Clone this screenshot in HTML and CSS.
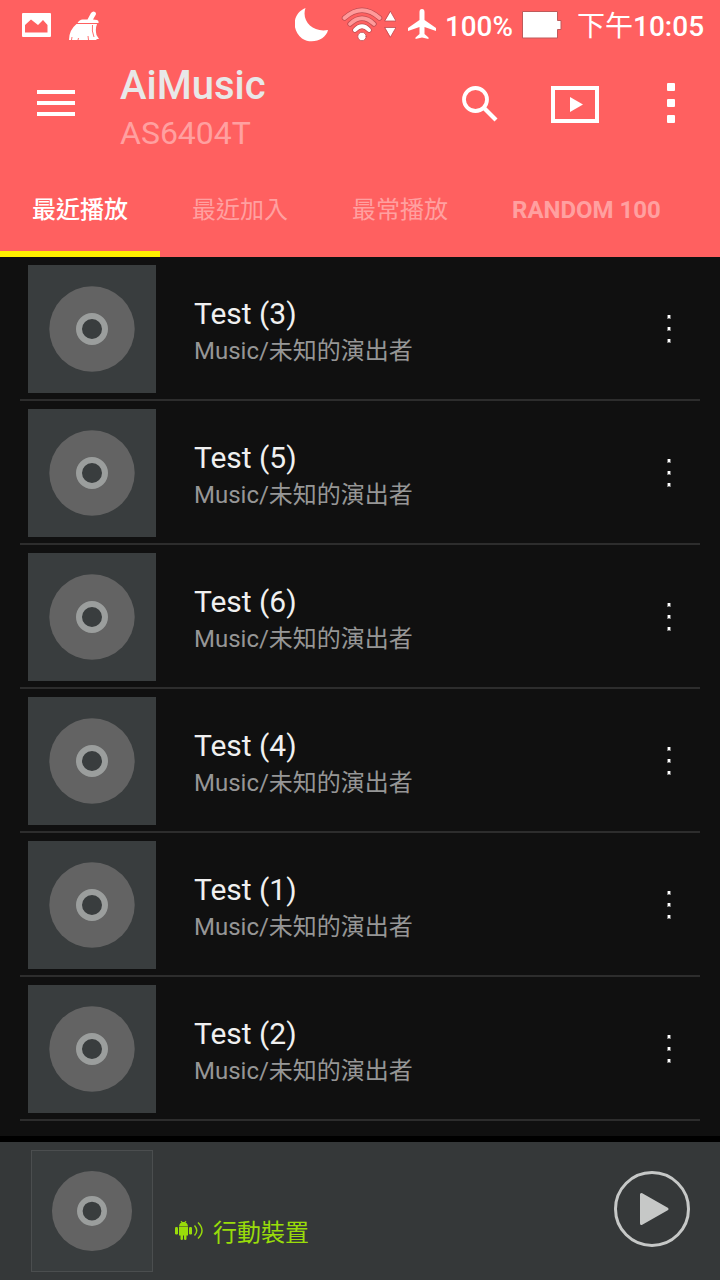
FILE: index.html
```html
<!DOCTYPE html>
<html lang="zh-Hant">
<head>
<meta charset="utf-8">
<title>AiMusic</title>
<link rel="stylesheet" href="styles.css">
</head>
<body>
<svg class="defs" width="0" height="0">
  <symbol id="disc" viewBox="0 0 128 128">
    <circle cx="64" cy="64" r="42.700" fill="#636363"/>
    <circle cx="64" cy="64" r="13" fill="#393d3e" stroke="#9b9e9d" stroke-width="6"/>
  </symbol>
  <symbol id="dots" viewBox="0 0 4 28">
    <path d="M0 0h4v4H0zM0 12h4v4H0zM0 24h4v4H0z" fill="#777"/>
    <path d="M1 0h2v3H1zM1 12h2v3H1zM1 24h2v3H1z" fill="#fff"/>
  </symbol>
</svg>
<header class="header">
  <div class="status">
    <svg class="status-photo" width="29" height="24" viewBox="0 0 29 24"><path fill="#fff" fill-rule="evenodd" d="M1 0h27q1 0 1 1v22q0 1-1 1H1q-1 0-1-1V1q0-1 1-1zM3 19.500h22.500v-7.500l-4.500-5-5 5-7-5.500L3 12z"/></svg>
    <svg class="status-broom" width="31" height="30" viewBox="0 0 31 30"><path fill="#fff" d="M18.500 8.500 22 2q2-2.500 4-1t0 4l-2 3.500 4 .5q2 .5 1.500 3H8.500q2-3.500 5-3.500zM7.500 13H28q-2 5-.5 11l2.500 4h-2l-1 1H0Q0 19 7.500 13z"/><path d="M23.500 14q-1 6 1.500 12M19 25l.5 4M3 26l-.5 3M9.500 27l-.5 2" fill="none" stroke="#ff6060" stroke-width=".9"/></svg>
    <svg class="status-moon" width="34" height="34" viewBox="0 0 34 34"><path fill="#fff" d="M10.500 0C-2.500 5-4 22 7 30.500 17 37 31 31.500 33 22 18 25 6 13 10.500 0z"/></svg>
    <svg class="status-wifi" width="55" height="36" viewBox="0 0 55 36" fill="none" stroke-linecap="round">
      <g stroke="#bf4b50" stroke-width="5.400"><path d="M3.500 12Q21-3.500 38.500 12"/><path d="M9 18Q21 6.500 33 18"/><path d="M14 24Q21 16.500 28 24"/></g>
      <g stroke="#ff9a9a" stroke-width="3.800"><path d="M3.500 12Q21-3.500 38.500 12"/><path d="M9 18Q21 6.500 33 18"/></g>
      <path stroke="#fff" stroke-width="4" d="M14 24Q21 16.500 28 24"/>
      <circle cx="21" cy="30.500" r="4.200" fill="#fff" stroke="#bf4b50" stroke-width=".8"/>
      <path d="M49.500 5.500 55 15H44zM44 21.500h11l-5.500 9.500z" fill="#fff" stroke="#bf4b50" stroke-width=".8" stroke-linejoin="round"/>
    </svg>
    <svg class="status-plane" width="28" height="30" viewBox="0 0 28 30"><path fill="#fff" d="M14 0q2.500 0 2.500 3v8L28 19v3l-11.500-4v7l4 3.500V30L14 28.500 7.500 30v-1.500l4-3.500v-7L0 22v-3l11.500-8V3q0-3 2.500-3z"/></svg>
    <span class="status-percent">100%</span>
    <svg class="status-battery" width="40" height="28" viewBox="0 0 40 28"><path d="M.5.500h35v9h3.500v9h-3.500v8.500H.5z" fill="#fff" stroke="#bf5a5a"/></svg>
    <span class="status-clock"><span class="meridiem">下午</span>10:05</span>
  </div>
  <div class="toolbar">
    <svg class="menu" width="38" height="26" viewBox="0 0 38 26"><path fill="#fff" d="M0 0h38v4H0zM0 11h38v4H0zM0 22h38v4H0z"/></svg>
    <div class="titles">
      <h1 class="title">AiMusic</h1>
      <div class="subtitle">AS6404T</div>
    </div>
    <svg class="search" width="36" height="36" viewBox="0 0 36 36" fill="none" stroke="#fff"><circle cx="13.500" cy="13.500" r="11.500" stroke-width="3.800"/><path d="M22 22l12 12" stroke-width="4.200"/></svg>
    <svg class="video" width="48" height="37" viewBox="0 0 48 37"><path fill="none" stroke="#fff" stroke-width="4" d="M2 2h44v33H2z"/><path fill="#fff" d="M19 11l13 7.500L19 26z"/></svg>
    <svg class="more" width="8" height="40" viewBox="0 0 8 40"><g fill="#fff"><rect width="8" height="8" rx="1"/><rect y="16" width="8" height="8" rx="1"/><rect y="32" width="8" height="8" rx="1"/></g></svg>
  </div>
  <nav class="tabs">
    <a class="tab tab-active">最近播放</a>
    <a class="tab">最近加入</a>
    <a class="tab">最常播放</a>
    <a class="tab tab-latin">RANDOM 100</a>
  </nav>
</header>
<main class="list">
  <div class="row"><svg class="cover"><use href="#disc"/></svg><div class="info"><div class="name">Test (3)</div><div class="artist">Music/未知的演出者</div></div><svg class="row-more"><use href="#dots"/></svg></div>
  <div class="row"><svg class="cover"><use href="#disc"/></svg><div class="info"><div class="name">Test (5)</div><div class="artist">Music/未知的演出者</div></div><svg class="row-more"><use href="#dots"/></svg></div>
  <div class="row"><svg class="cover"><use href="#disc"/></svg><div class="info"><div class="name">Test (6)</div><div class="artist">Music/未知的演出者</div></div><svg class="row-more"><use href="#dots"/></svg></div>
  <div class="row"><svg class="cover"><use href="#disc"/></svg><div class="info"><div class="name">Test (4)</div><div class="artist">Music/未知的演出者</div></div><svg class="row-more"><use href="#dots"/></svg></div>
  <div class="row"><svg class="cover"><use href="#disc"/></svg><div class="info"><div class="name">Test (1)</div><div class="artist">Music/未知的演出者</div></div><svg class="row-more"><use href="#dots"/></svg></div>
  <div class="row"><svg class="cover"><use href="#disc"/></svg><div class="info"><div class="name">Test (2)</div><div class="artist">Music/未知的演出者</div></div><svg class="row-more"><use href="#dots"/></svg></div>
</main>
<footer class="player">
  <svg class="player-cover"><use href="#disc"/></svg>
  <div class="device">
    <svg width="28" height="20" viewBox="0 0 28 20"><g fill="#99dc0a"><path d="M4 5.500Q4.500 2 6.500 1.500L5.500 0h1L7.500 1h2L10.500 0h1l-1 1.500Q12.500 2 13 5.500zM4 6h9v8.500h-1.500V18q0 1-1.200 1T9 18v-3.500H8V18q0 1-1.200 1t-1.300-1v-3.500H4z"/><rect y="6" width="3" height="7.500" rx="1.200"/><rect x="14" y="6" width="3" height="7.500" rx="1.200"/></g><path d="M19.500 4.500q4.500 5 0 10M23 1.500q8 8 0 16" fill="none" stroke="#99dc0a" stroke-width="1.400"/></svg>
    <span>行動裝置</span>
  </div>
  <svg class="play" width="76" height="76" viewBox="0 0 76 76"><circle cx="38" cy="38" r="36.500" fill="none" stroke="#c6c8c7" stroke-width="3"/><path d="M27.500 23.500v29L53 38z" fill="#c6c8c7" stroke="#c6c8c7" stroke-width="3" stroke-linejoin="round"/></svg>
</footer>
</body>
</html>
```
FILE: styles.css
```css
* { box-sizing: border-box; }
body {
  margin: 0;
  width: 720px;
  height: 1280px;
  display: flex;
  flex-direction: column;
  overflow: hidden;
  background: #000;
  font-family: Roboto, "Noto Sans CJK TC", sans-serif;
}
svg { display: block; flex: none; }
.defs { display: none; }
.header { height: 257px; background: #ff6060; }
.status { display: flex; height: 50px; color: #fff; font-size: 28px; font-weight: 500; line-height: 32px; white-space: nowrap; }
.status-photo { margin: 13px 0 0 22px; }
.status-broom { margin: 11px 0 0 18px; }
.status-moon { margin: 8px 0 0 195px; }
.status-wifi { margin: 6px 0 0 12px; }
.status-plane { margin: 9px 0 0 12px; }
.status-percent { width: 76px; margin: 11px 0 0 9px; font-size: 27.8px; }
.status-battery { margin: 11px 0 0 1px; }
.status-clock { margin: 11px 0 0 15px; }
.meridiem { font-weight: 400; }
.toolbar { display: flex; height: 112px; }
.menu { margin: 40px 0 0 37px; }
.titles { width: 342px; padding: 12px 0 0 45px; }
.title { margin: 0; color: #e8e8e8; font-size: 40px; font-weight: 500; line-height: 48px; }
.subtitle { color: #ffa0a0; font-size: 32px; line-height: 46px; }
.search { margin: 36px 0 0 45px; }
.video { margin: 36px 0 0 53px; }
.more { margin: 33px 0 0 68px; }
.tabs { display: flex; height: 95px; }
.tab { padding: 30px 32px 0; color: #ffa0a0; font-size: 24px; font-weight: 400; line-height: 36px; white-space: nowrap; }
.tab-latin { font-weight: 700; }
.tab-active { color: #fff; font-weight: 500; border-bottom: 6px solid #fff000; }
.list { height: 879px; background: #101010; }
.row { display: flex; height: 144px; margin: 0 20px; padding: 8px 8px 6px; border-bottom: 2px solid #2d2d2d; }
.cover { width: 128px; height: 128px; background: #393d3e; }
.info { flex: 1; padding: 30px 0 0 38px; }
.name { color: #f0f0f0; font-size: 30px; line-height: 38px; }
.artist { color: #969696; font-size: 24px; line-height: 36px; }
.row-more { width: 4px; height: 28px; margin: 50px 21px 0 0; }
.player { display: flex; height: 138px; margin-top: 6px; background: #353839; }
.player-cover { width: 122px; height: 122px; margin: 8px 0 0 31px; background: #393d3e; border: 1px solid #4b4e4f; }
.device { display: flex; flex: 1; align-items: center; gap: 10px; height: 36px; margin: 71px 0 0 22px; color: #99dc0a; font-size: 24px; }
.device span { padding-bottom: 2px; }
.play { margin: 29px 30px 0 0; }
```
